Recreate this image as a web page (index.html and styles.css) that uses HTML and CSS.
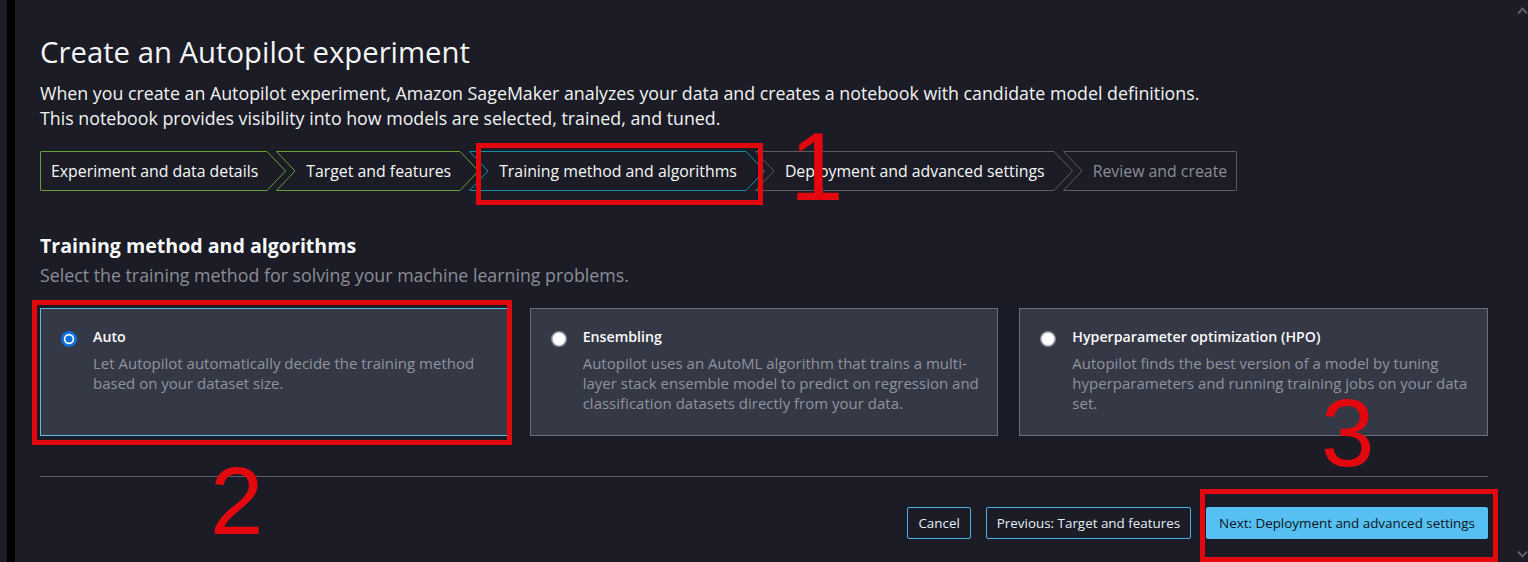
FILE: index.html
```html
<!DOCTYPE html>
<html lang="en">
<head>
<meta charset="utf-8">
<title>Create an Autopilot experiment</title>
<link rel="stylesheet" href="styles.css">
</head>
<body>
<div class="frame">
  <div class="gutter"></div>
  <div class="rail"></div>
  <main class="page">
    <h1 class="title">Create an Autopilot experiment</h1>
    <p class="lead">When you create an Autopilot experiment, Amazon SageMaker analyzes your data and creates a notebook with candidate model definitions.<br>This notebook provides visibility into how models are selected, trained, and tuned.</p>

    <nav class="steps">
      <div class="step step-first done">
        <span class="step-body"><span class="step-label">Experiment and data details</span></span>
        <svg class="chev" width="19" height="40" viewBox="0 0 19 40"><path d="M0 .5L18.5 20 0 39.5" /></svg>
      </div>
      <div class="step done">
        <svg class="chev" width="19" height="40" viewBox="0 0 19 40"><path d="M19 .5H.5L19 20 .5 39.5H19" /></svg>
        <span class="step-body"><span class="step-label">Target and features</span></span>
        <svg class="chev" width="19" height="40" viewBox="0 0 19 40"><path d="M0 .5L18.5 20 0 39.5" /></svg>
      </div>
      <div class="step current">
        <svg class="chev" width="19" height="40" viewBox="0 0 19 40"><path d="M19 .5H.5L19 20 .5 39.5H19" /></svg>
        <span class="step-body"><span class="step-label">Training method and algorithms</span></span>
        <svg class="chev" width="19" height="40" viewBox="0 0 19 40"><path d="M0 .5L18.5 20 0 39.5" /></svg>
      </div>
      <div class="step todo">
        <svg class="chev" width="19" height="40" viewBox="0 0 19 40"><path d="M19 .5H.5L19 20 .5 39.5H19" /></svg>
        <span class="step-body"><span class="step-label">Deployment and advanced settings</span></span>
        <svg class="chev" width="19" height="40" viewBox="0 0 19 40"><path d="M0 .5L18.5 20 0 39.5" /></svg>
      </div>
      <div class="step step-last todo">
        <svg class="chev" width="19" height="40" viewBox="0 0 19 40"><path d="M19 .5H.5L19 20 .5 39.5H19" /></svg>
        <span class="step-body"><span class="step-label muted">Review and create</span></span>
      </div>
    </nav>

    <h2 class="section-title">Training method and algorithms</h2>
    <p class="section-desc">Select the training method for solving your machine learning problems.</p>

    <div class="cards">
      <div class="card selected">
        <svg class="radio" width="16" height="16" viewBox="0 0 16 16"><circle cx="8" cy="8" r="8" fill="#0b6fdc"/><circle cx="8" cy="8" r="5.2" fill="#ffffff"/><circle cx="8" cy="8" r="3.6" fill="#0b6fdc"/></svg>
        <div class="card-text">
          <div class="card-label">Auto</div>
          <div class="card-desc">Let Autopilot automatically decide the training method based on your dataset size.</div>
        </div>
      </div>
      <div class="card">
        <svg class="radio" width="16" height="16" viewBox="0 0 16 16"><circle cx="8" cy="8" r="7.25" fill="#ffffff" stroke="#8d9099" stroke-width="1.5"/></svg>
        <div class="card-text">
          <div class="card-label">Ensembling</div>
          <div class="card-desc">Autopilot uses an AutoML algorithm that trains a multi-layer stack ensemble model to predict on regression and classification datasets directly from your data.</div>
        </div>
      </div>
      <div class="card">
        <svg class="radio" width="16" height="16" viewBox="0 0 16 16"><circle cx="8" cy="8" r="7.25" fill="#ffffff" stroke="#8d9099" stroke-width="1.5"/></svg>
        <div class="card-text">
          <div class="card-label">Hyperparameter optimization (HPO)</div>
          <div class="card-desc">Autopilot finds the best version of a model by tuning hyperparameters and running training jobs on your data set.</div>
        </div>
      </div>
    </div>

    <div class="divider"></div>

    <div class="actions">
      <button class="btn" type="button">Cancel</button>
      <button class="btn" type="button">Previous: Target and features</button>
      <button class="btn btn-primary" type="button">Next: Deployment and advanced settings</button>
    </div>
  </main>
  <div class="scrollbar">
    <svg width="11" height="9" viewBox="0 0 11 9"><path d="M1 7.5L5.5 2.5 10 7.5" /></svg>
    <svg width="11" height="9" viewBox="0 0 11 9"><path d="M1 1.5L5.5 6.5 10 1.5" /></svg>
  </div>

  <div class="mark mark-1"></div>
  <div class="mark mark-2"></div>
  <div class="mark mark-3"></div>
  <div class="num num-1">1</div>
  <div class="num num-2">2</div>
  <div class="num num-3">3</div>
</div>
</body>
</html>
```

FILE: styles.css
```css
* {
  box-sizing: border-box;
}

html,
body {
  margin: 0;
  background: #1b1c25;
}

body {
  font-family: "Open Sans", "Liberation Sans", sans-serif;
  color: #f2f3f3;
}

.frame {
  position: relative;
  display: flex;
  height: 562px;
  overflow: hidden;
}

.gutter {
  flex: none;
  width: 7px;
  background: #1b1c25;
}

.rail {
  flex: none;
  width: 8px;
  background: #000000;
}

.page {
  flex: 1;
  min-width: 0;
  padding: 34px 28px 0 25px;
}

.scrollbar {
  flex: none;
  width: 12px;
  display: flex;
  flex-direction: column;
  justify-content: space-between;
  align-items: flex-end;
  padding: 6px 0 3px;
}

.scrollbar path {
  fill: none;
  stroke: #5b5c6a;
  stroke-width: 2;
}

/* Header */
.title {
  margin: 0;
  font-size: 29.3px;
  line-height: 36px;
  font-weight: 400;
  color: #f4f5f6;
}

.lead {
  margin: 11px 0 0;
  font-size: 17.8px;
  line-height: 25px;
  color: #f2f3f3;
}

/* Stepper */
.steps {
  display: flex;
  height: 40px;
  margin-top: 20px;
}

.step {
  display: flex;
  height: 40px;
}

.step + .step {
  margin-left: -10px;
}

.chev {
  flex: none;
  display: block;
}

.chev path {
  fill: none;
  stroke: currentColor;
  stroke-width: 1;
}

.step-body {
  display: flex;
  align-items: center;
  height: 40px;
  padding: 0 9px 0 11px;
  border-top: 1px solid currentColor;
  border-bottom: 1px solid currentColor;
  white-space: nowrap;
}

.step-first .step-body {
  border-left: 1px solid currentColor;
  border-radius: 2px 0 0 2px;
  padding-left: 10px;
}

.step-last .step-body {
  border-right: 1px solid currentColor;
  border-radius: 0 2px 2px 0;
}

.step-label {
  font-size: 15.85px;
  color: #f7f8f8;
}

.step-label.muted {
  color: #8b8e95;
}

.done {
  color: #65a334;
}

.current {
  color: #0e93a6;
}

.todo {
  color: #5a5c64;
}

/* Section */
.section-title {
  margin: 43px 0 0;
  font-size: 19.6px;
  line-height: 24px;
  font-weight: 700;
  color: #f7f8f8;
}

.section-desc {
  margin: 6px 0 0;
  font-size: 17.8px;
  line-height: 22px;
  color: #8a8e98;
}

/* Cards */
.cards {
  display: grid;
  grid-template-columns: repeat(3, 1fr);
  gap: 21px;
  margin-top: 22px;
}

.card {
  display: flex;
  align-items: flex-start;
  gap: 16px;
  height: 128px;
  padding: 18px 12px 0 20px;
  background: #353845;
  border: 1px solid #6b6e79;
}

.card.selected {
  border-color: #5cbbe6;
}

.radio {
  flex: none;
  display: block;
  margin-top: 3.5px;
}

.card-text {
  min-width: 0;
}

.card-label {
  font-size: 14.2px;
  line-height: 20px;
  font-weight: 600;
  color: #fbfbfc;
}

.card-desc {
  margin-top: 6px;
  font-size: 15px;
  line-height: 20px;
  color: #8f949e;
}

/* Footer */
.divider {
  margin-top: 40px;
  border-top: 1px solid #5b5e66;
}

.actions {
  display: flex;
  justify-content: flex-end;
  gap: 15px;
  margin-top: 30px;
}

.btn {
  height: 32px;
  padding: 0 10px;
  border: 1px solid #48b3e6;
  border-radius: 2px;
  background: transparent;
  color: #e4f0f9;
  font-family: "Open Sans", "Liberation Sans", sans-serif;
  font-size: 13.4px;
  line-height: 20px;
  white-space: nowrap;
  cursor: pointer;
}

.btn-primary {
  padding: 0 12px;
  background: #56c0f2;
  border-color: #56c0f2;
  color: #0f141a;
}

/* Red annotations drawn over the screenshot */
.mark {
  position: absolute;
  border: 5px solid #e3080d;
}

.mark-1 {
  left: 476px;
  top: 143px;
  width: 287px;
  height: 62px;
}

.mark-2 {
  left: 32px;
  top: 300px;
  width: 480px;
  height: 145px;
}

.mark-3 {
  left: 1200px;
  top: 489px;
  width: 298px;
  height: 73px;
}

.num {
  position: absolute;
  font-family: "Liberation Sans", Arial, sans-serif;
  font-size: 96px;
  line-height: 1;
  color: #e3080d;
}

.num-1 {
  left: 790px;
  top: 119px;
}

.num-2 {
  left: 210px;
  top: 453px;
}

.num-3 {
  left: 1321px;
  top: 385px;
}
```
